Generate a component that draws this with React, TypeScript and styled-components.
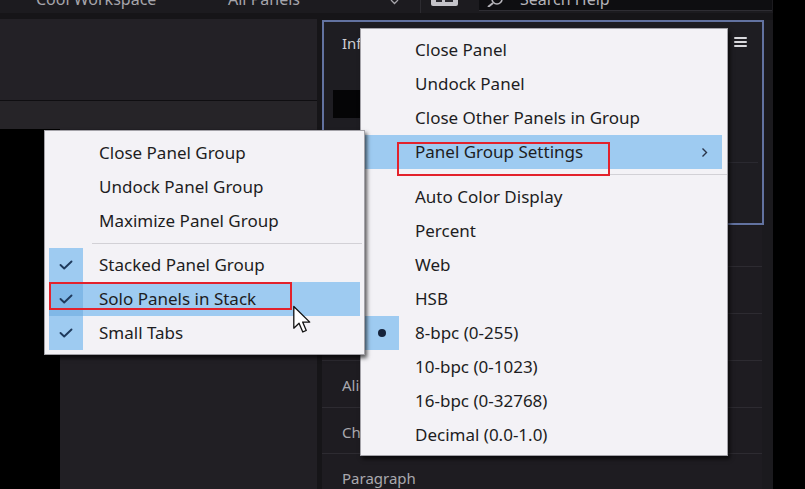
import React from "react";
import styled, { createGlobalStyle } from "styled-components";

const Global = createGlobalStyle`
  html, body { margin: 0; padding: 0; background: #000; overflow: hidden; }
  body { font-family: "Noto Sans", "Open Sans", sans-serif; }
  * { box-sizing: border-box; }
`;

const Screen = styled.div`
  position: relative;
  width: 773px;
  height: 489px;
  overflow: hidden;
  background: #161518;
  display: flex;
  flex-direction: column;
`;

/* ---------- top bar ---------- */
const TopBar = styled.div`
  height: 13px;
  flex: none;
  display: flex;
  align-items: flex-start;
  padding-left: 36px;
  background: #1c1b1f;
  overflow: hidden;
`;

const TopSlot = styled.div<{ $w: number }>`
  width: ${(p) => p.$w}px;
  flex: none;
  display: flex;
  align-items: flex-start;
`;

const TopLabel = styled.span`
  margin-top: -9px;
  font-size: 16px;
  line-height: 16px;
  color: #a6a5ab;
  white-space: nowrap;
`;

const TopDivider = styled.div`
  width: 1px;
  height: 13px;
  background: #2c2b30;
  margin-right: 9px;
  flex: none;
`;

const SearchBox = styled.div`
  width: 293px;
  height: 11px;
  margin-left: 20px;
  flex: none;
  display: flex;
  align-items: flex-start;
  background: #0e0e11;
  border-bottom: 1px solid #2e2d33;
  padding-left: 6px;
`;

const SearchText = styled(TopLabel)`
  margin-left: 15px;
  color: #b4b3b9;
`;

/* ---------- main area ---------- */
const Main = styled.div`
  flex: 1;
  display: flex;
  gap: 5px;
  padding-top: 6px;
  min-height: 0;
`;

const LeftCol = styled.div`
  width: 317px;
  flex: none;
  display: flex;
  flex-direction: column;
`;

const UpperPanel = styled.div`
  height: 81px;
  flex: none;
  background: #232126;
`;

const HLine = styled.div<{ $c: string }>`
  height: 1px;
  flex: none;
  background: ${(p) => p.$c};
`;

const Band = styled.div`
  height: 28px;
  flex: none;
  background: #262428;
`;

const Lower = styled.div`
  flex: 1;
  display: flex;
`;

const BlackStrip = styled.div`
  width: 60px;
  background: #000;
`;

const LowerPanel = styled.div`
  flex: 1;
  background: #211f24;
`;

const RightCol = styled.div`
  width: 451px;
  flex: none;
  margin-top: 1px;
  display: flex;
  flex-direction: column;
  background: #1b1a1e;
`;

const InfoPanel = styled.div`
  width: 442px;
  height: 205px;
  flex: none;
  border: 2px solid #6272a0;
  background: #1e1d22;
  display: flex;
  flex-direction: column;
`;

const InfoHeader = styled.div`
  display: flex;
  justify-content: space-between;
  align-items: center;
  padding: 12px 15px 0 18px;
  height: 30px;
`;

const TabLabel = styled.span`
  font-size: 15px;
  line-height: 18px;
  color: #cfcfd4;
`;

const Hamburger = styled.div`
  width: 13px;
  display: flex;
  flex-direction: column;
  gap: 2px;
  margin-top: -2px;
  & > span {
    height: 2px;
    background: #d9d9dd;
    border-radius: 1px;
  }
`;

const Readout = styled.div`
  width: 300px;
  height: 28px;
  margin: 38px 0 0 9px;
  background: #050506;
`;

const FaintLine = styled.div`
  height: 1px;
  margin: 44px 4px 0 4px;
  background: #2a2930;
`;

const Stack = styled.div`
  margin-top: 1px;
  display: flex;
  flex-direction: column;
`;

const StackRow = styled.div<{ $h: number; $first?: boolean }>`
  height: ${(p) => p.$h}px;
  flex: none;
  margin-right: 11px;
  border-top: ${(p) => (p.$first ? "none" : "1px solid #2d2b31")};
  display: flex;
  align-items: center;
  padding: 2px 0 0 20px;
  background: #1e1c21;
`;

const StackLabel = styled.span`
  font-size: 15px;
  color: #a9a8ae;
  white-space: nowrap;
`;

/* ---------- menus ---------- */
const Menu = styled.div<{ $x: number; $y: number; $w: number; $pad: string }>`
  position: absolute;
  left: ${(p) => p.$x}px;
  top: ${(p) => p.$y}px;
  width: ${(p) => p.$w}px;
  padding: ${(p) => p.$pad};
  background: #f3f2f6;
  border: 1px solid #a3a2a8;
  box-shadow: 2px 3px 4px rgba(0, 0, 0, 0.65);
  display: flex;
  flex-direction: column;
`;

const Item = styled.div<{ $active?: boolean }>`
  height: 34px;
  display: flex;
  align-items: center;
  background: ${(p) => (p.$active ? "#9ecbf1" : "transparent")};
`;

const IconCell = styled.div<{ $w: number; $on?: boolean; $active?: boolean }>`
  width: ${(p) => p.$w}px;
  height: 100%;
  flex: none;
  display: flex;
  align-items: center;
  justify-content: center;
  background: ${(p) =>
    p.$on ? (p.$active ? "#80b8e7" : "#9ecbf1") : "transparent"};
`;

const ItemLabel = styled.span`
  margin-left: 16px;
  flex: 1;
  font-size: 17px;
  line-height: 20px;
  color: #1d1d22;
  white-space: nowrap;
`;

const SubArrow = styled.svg`
  margin-right: 14px;
  flex: none;
`;

const Dot = styled.span`
  width: 8px;
  height: 8px;
  border-radius: 50%;
  background: #15233b;
  margin-left: 4px;
`;

const Sep = styled.div<{ $h: number; $inset: number; $right: number }>`
  height: ${(p) => p.$h}px;
  display: flex;
  align-items: center;
  margin-right: -${(p) => p.$right}px;
  & > span {
    flex: 1;
    height: 1px;
    margin-left: ${(p) => p.$inset}px;
    background: #d2d1d6;
  }
`;

const Annotation = styled.div<{ $x: number; $y: number; $w: number; $h: number }>`
  position: absolute;
  left: ${(p) => p.$x}px;
  top: ${(p) => p.$y}px;
  width: ${(p) => p.$w}px;
  height: ${(p) => p.$h}px;
  border: 2px solid #e3222c;
  pointer-events: none;
`;

const Cursor = styled.svg`
  position: absolute;
  left: 292px;
  top: 305px;
`;

const Check = () => (
  <svg width="14" height="10" viewBox="0 0 14 10">
    <polyline
      points="1.5,5 5.2,8.5 12.5,1.5"
      fill="none"
      stroke="#1f3a5c"
      strokeWidth="1.9"
      strokeLinecap="round"
      strokeLinejoin="round"
    />
  </svg>
);

type Entry =
  | { kind: "item"; label: string; check?: boolean; dot?: boolean; active?: boolean; sub?: boolean }
  | { kind: "sep"; h: number };

const rightEntries: Entry[] = [
  { kind: "item", label: "Close Panel" },
  { kind: "item", label: "Undock Panel" },
  { kind: "item", label: "Close Other Panels in Group" },
  { kind: "item", label: "Panel Group Settings", active: true, sub: true },
  { kind: "sep", h: 11 },
  { kind: "item", label: "Auto Color Display" },
  { kind: "item", label: "Percent" },
  { kind: "item", label: "Web" },
  { kind: "item", label: "HSB" },
  { kind: "item", label: "8-bpc (0-255)", dot: true },
  { kind: "item", label: "10-bpc (0-1023)" },
  { kind: "item", label: "16-bpc (0-32768)" },
  { kind: "item", label: "Decimal (0.0-1.0)" },
];

const leftEntries: Entry[] = [
  { kind: "item", label: "Close Panel Group" },
  { kind: "item", label: "Undock Panel Group" },
  { kind: "item", label: "Maximize Panel Group" },
  { kind: "sep", h: 10 },
  { kind: "item", label: "Stacked Panel Group", check: true },
  { kind: "item", label: "Solo Panels in Stack", check: true, active: true },
  { kind: "item", label: "Small Tabs", check: true },
];

const MenuBody = ({ entries, iconW, sepRight }: { entries: Entry[]; iconW: number; sepRight: number }) => (
  <>
    {entries.map((e, i) =>
      e.kind === "sep" ? (
        <Sep key={i} $h={e.h} $inset={iconW + 9} $right={sepRight}>
          <span />
        </Sep>
      ) : (
        <Item key={i} $active={e.active}>
          <IconCell $w={iconW} $on={e.check || e.dot} $active={e.active}>
            {e.check && <Check />}
            {e.dot && <Dot />}
          </IconCell>
          <ItemLabel>{e.label}</ItemLabel>
          {e.sub && (
            <SubArrow width="7" height="11" viewBox="0 0 7 11">
              <polyline points="1.5,1.5 5.5,5.5 1.5,9.5" fill="none" stroke="#2a3448" strokeWidth="1.4" />
            </SubArrow>
          )}
        </Item>
      )
    )}
  </>
);

export default function App() {
  return (
    <>
      <Global />
      <Screen>
        <TopBar>
          <TopSlot $w={192}>
            <TopLabel>Cool Workspace</TopLabel>
          </TopSlot>
          <TopSlot $w={162}>
            <TopLabel>All Panels</TopLabel>
          </TopSlot>
          <TopSlot $w={30}>
            <svg width="9" height="6" viewBox="0 0 9 6">
              <polyline points="1,0 4.5,3.5 8,0" fill="none" stroke="#a6a5ab" strokeWidth="1.3" />
            </svg>
          </TopSlot>
          <TopDivider />
          <TopSlot $w={29}>
            <svg width="29" height="8" viewBox="0 0 29 8">
              <rect x="1" y="-6" width="27" height="12" rx="2" fill="#c4c3c9" />
              <rect x="6" y="-2" width="6" height="4" fill="#2b2a30" />
              <rect x="15" y="-2" width="8" height="4" fill="#2b2a30" />
            </svg>
          </TopSlot>
          <SearchBox>
            <svg width="20" height="7" viewBox="0 0 20 7">
              <circle cx="12" cy="-1" r="5" fill="none" stroke="#b4b3b9" strokeWidth="1.6" />
              <line x1="8" y1="3" x2="3" y2="7" stroke="#b4b3b9" strokeWidth="2" />
            </svg>
            <SearchText>Search Help</SearchText>
          </SearchBox>
        </TopBar>

        <Main>
          <LeftCol>
            <UpperPanel />
            <HLine $c="#0f0e11" />
            <Band />
            <Lower>
              <BlackStrip />
              <LowerPanel />
            </Lower>
          </LeftCol>

          <RightCol>
            <InfoPanel>
              <InfoHeader>
                <TabLabel>Info</TabLabel>
                <Hamburger>
                  <span />
                  <span />
                  <span />
                </Hamburger>
              </InfoHeader>
              <Readout />
              <FaintLine />
            </InfoPanel>
            <Stack>
              <StackRow $h={40} $first />
              <StackRow $h={47} />
              <StackRow $h={47} />
              <StackRow $h={47}>
                <StackLabel>Align</StackLabel>
              </StackRow>
              <StackRow $h={46}>
                <StackLabel>Character</StackLabel>
              </StackRow>
              <StackRow $h={47}>
                <StackLabel>Paragraph</StackLabel>
              </StackRow>
            </Stack>
          </RightCol>
        </Main>

        <Menu $x={360} $y={28} $w={368} $pad="4px 5px 3px 0">
          <MenuBody entries={rightEntries} iconW={38} sepRight={5} />
        </Menu>

        <Menu $x={44} $y={130} $w={321} $pad="5px 4px 4px 4px">
          <MenuBody entries={leftEntries} iconW={34} sepRight={2} />
        </Menu>

        <Annotation $x={397} $y={142} $w={213} $h={34} />
        <Annotation $x={49} $y={282} $w={243} $h={28} />

        <Cursor width="21" height="29" viewBox="0 0 14 20">
          <path
            d="M1 1 L1 16 L4.6 12.6 L7.2 18.6 L9.6 17.6 L7.1 11.8 L12 11.8 Z"
            fill="#ffffff"
            stroke="#111"
            strokeWidth="0.9"
            strokeLinejoin="round"
          />
        </Cursor>
      </Screen>
    </>
  );
}
